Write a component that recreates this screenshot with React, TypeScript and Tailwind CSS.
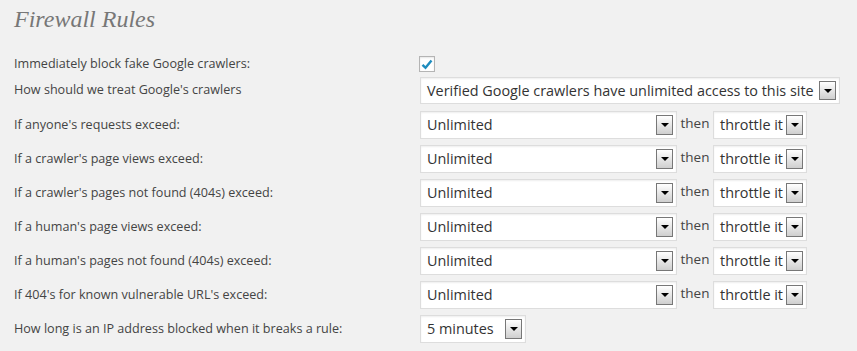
const rows = [
  "If anyone's requests exceed:",
  "If a crawler's page views exceed:",
  "If a crawler's pages not found (404s) exceed:",
  "If a human's page views exceed:",
  "If a human's pages not found (404s) exceed:",
  "If 404's for known vulnerable URL's exceed:",
]

function Arrow() {
  return (
    <span className="absolute right-[3px] top-[3px] bottom-[3px] flex w-[17px] items-center justify-center border border-[#777] bg-gradient-to-b from-white to-[#cfcfcf]">
      <span className="h-0 w-0 border-x-[4px] border-t-[4px] border-x-transparent border-t-black" />
    </span>
  )
}

function FakeSelect({ value, width, height = 'h-[28px]' }: { value: string; width: string; height?: string }) {
  return (
    <div
      className={`relative flex shrink-0 items-center border border-[#dddddd] bg-white pl-[6px] text-[14.4px] text-[#333] shadow-[inset_0_1px_2px_rgba(0,0,0,0.07)] ${width} ${height}`}
    >
      <span className="whitespace-nowrap">{value}</span>
      <Arrow />
    </div>
  )
}

export default function App() {
  return (
    <div className="h-[351px] w-[857px] overflow-hidden bg-[#f1f1f1] font-['Open_Sans',sans-serif] text-[12.6px] text-[#444]">
      <h2 className="pl-[14px] pt-[3px] font-['Liberation_Serif',serif] text-[24px] italic leading-[32px] text-[#777]">
        Firewall Rules
      </h2>

      <div className="mt-[17px] flex h-[24px] items-center">
        <span className="w-[419px] shrink-0 pl-[14px]">Immediately block fake Google crawlers:</span>
        <span className="flex h-[16px] w-[16px] items-center justify-center border border-[#b4b4b4] bg-white shadow-[inset_0_1px_2px_rgba(0,0,0,0.1)]">
          <svg width="12" height="11" viewBox="0 0 12 11">
            <path d="M1.5 5.8 L4.5 8.8 L10.5 1.5" fill="none" stroke="#1e8cbe" strokeWidth="2.4" />
          </svg>
        </span>
      </div>

      <div className="mt-[1px] flex items-center">
        <span className="w-[420px] shrink-0 pl-[14px]">How should we treat Google's crawlers</span>
        <FakeSelect value="Verified Google crawlers have unlimited access to this site" width="w-[420px]" height="h-[27px]" />
      </div>

      <div className="mt-[7px] flex flex-col gap-[6px]">
        {rows.map((r) => (
          <div key={r} className="flex items-center">
            <span className="w-[420px] shrink-0 pl-[14px]">{r}</span>
            <FakeSelect value="Unlimited" width="w-[257px]" />
            <span className="mb-[4px] w-[36px] shrink-0 text-center text-[13.5px] text-[#444]">then</span>
            <FakeSelect value="throttle it" width="w-[94px]" />
          </div>
        ))}
        <div className="flex items-center">
          <span className="w-[420px] shrink-0 pl-[14px]">How long is an IP address blocked when it breaks a rule:</span>
          <FakeSelect value="5 minutes" width="w-[106px]" />
        </div>
      </div>
    </div>
  )
}
